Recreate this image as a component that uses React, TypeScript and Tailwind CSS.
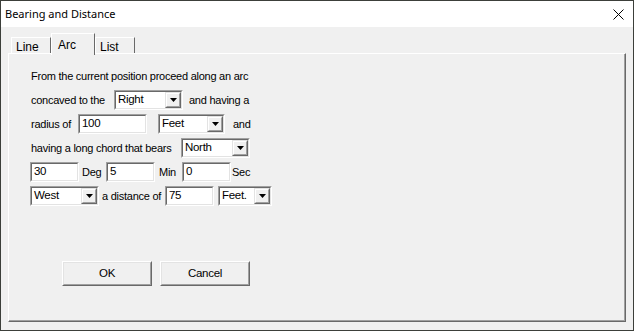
import React from "react";

const font = { fontFamily: '"Liberation Sans", Arial, sans-serif' };

function Sunken({ w, children }: { w: number; children: React.ReactNode }) {
  return (
    <div
      className="h-[20px] shrink-0 border border-t-[#a0a0a0] border-l-[#a0a0a0] border-b-white border-r-white"
      style={{ width: w }}
    >
      <div className="flex h-full w-full border border-t-[#696969] border-l-[#696969] border-b-[#e3e3e3] border-r-[#e3e3e3] bg-white">
        {children}
      </div>
    </div>
  );
}

function Input({ w, value }: { w: number; value: string }) {
  return (
    <Sunken w={w}>
      <span className="flex items-center pl-[2px] text-[11.5px] leading-none tracking-[-0.3px] text-black">{value}</span>
    </Sunken>
  );
}

function Combo({ w, value }: { w: number; value: string }) {
  return (
    <Sunken w={w}>
      <span className="flex flex-1 items-center pl-[2px] text-[11.5px] leading-none tracking-[-0.3px] text-black">{value}</span>
      <div className="h-full w-[16px] border border-t-[#e3e3e3] border-l-[#e3e3e3] border-b-[#696969] border-r-[#696969] bg-[#f0f0f0]">
        <div className="flex h-full w-full items-center justify-center border border-t-white border-l-white border-b-[#a0a0a0] border-r-[#a0a0a0]">
          <svg width="7" height="4" viewBox="0 0 7 4">
            <path d="M0 0h7L3.5 4z" fill="#000" />
          </svg>
        </div>
      </div>
    </Sunken>
  );
}

function T({ w, className = "", children }: { w?: number; className?: string; children: React.ReactNode }) {
  return (
    <span
      className={`shrink-0 whitespace-nowrap text-[11px] leading-none tracking-[-0.25px] text-black ${className}`}
      style={w ? { width: w } : undefined}
    >
      {children}
    </span>
  );
}

function Button({ label }: { label: string }) {
  return (
    <div className="h-[25px] w-[90px] border border-t-white border-l-white border-b-[#696969] border-r-[#696969] bg-[#f0f0f0]">
      <div className="flex h-full w-full items-center justify-center border border-t-[#e3e3e3] border-l-[#e3e3e3] border-b-[#a0a0a0] border-r-[#a0a0a0] text-[11.5px] tracking-[-0.3px] text-black">
        {label}
      </div>
    </div>
  );
}

function Tab({ label, active }: { label: string; active?: boolean }) {
  if (active) {
    return (
      <div className="relative z-10 -mb-[2px] flex h-[22px] w-[44px] items-start border-l border-t border-r border-l-white border-t-white border-r-[#696969] bg-[#f0f0f0] pl-[6px] pt-[2px] text-[12px] text-black">
        {label}
      </div>
    );
  }
  return (
    <div className="mt-[4px] flex h-[16px] w-[40px] items-start border-l border-t border-r border-l-white border-t-white border-r-[#696969] bg-[#f0f0f0] pl-[4px] pt-[3px] text-[12px] leading-none text-black">
      {label}
    </div>
  );
}

export default function App() {
  return (
    <div className="flex h-[331px] w-[634px] flex-col border border-[#3c3f3a] bg-[#f0f0f0]" style={font}>
      <div className="flex h-[26px] shrink-0 items-center justify-between bg-white pl-[4px] pr-[9px]">
        <span className="text-[11px] text-black" style={{ fontFamily: '"Noto Sans", "Open Sans", sans-serif' }}>
          Bearing and Distance
        </span>
        <svg width="11" height="11" viewBox="0 0 11 11">
          <path d="M0.5 0.5L10.5 10.5M10.5 0.5L0.5 10.5" stroke="#000" strokeWidth="1" />
        </svg>
      </div>
      <div className="flex flex-1 flex-col px-[7px] pt-[6px]">
        <div className="flex h-[20px] items-start pl-[3px]">
          <Tab label="Line" />
          <Tab label="Arc" active />
          <Tab label="List" />
        </div>
        <div className="flex h-[269px] flex-col border border-t-white border-l-white border-b-[#696969] border-r-[#696969]">
          <div className="flex h-full flex-col border-b border-r border-b-[#a0a0a0] border-r-[#a0a0a0] pl-[21px] pt-[10px]">
            <div className="flex h-[24px] items-center">
              <T className="pl-[1px]">From the current position proceed along an arc</T>
            </div>
            <div className="flex h-[24px] items-center">
              <T w={84} className="pl-[1px]">concaved to the</T>
              <Combo w={69} value="Right" />
              <T className="ml-[6px]">and having a</T>
            </div>
            <div className="flex h-[24px] items-center">
              <T w={48} className="pl-[1px]">radius of</T>
              <Input w={69} value="100" />
              <div className="w-[11px] shrink-0" />
              <Combo w={67} value="Feet" />
              <T className="ml-[8px]">and</T>
            </div>
            <div className="flex h-[24px] items-center">
              <T w={151} className="pl-[1px]">having a long chord that bears</T>
              <Combo w={69} value="North" />
            </div>
            <div className="flex h-[24px] items-center">
              <Input w={49} value="30" />
              <T w={27} className="pl-[3px]">Deg</T>
              <Input w={49} value="5" />
              <T w={27} className="pl-[4px]">Min</T>
              <Input w={49} value="0" />
              <T className="pl-[1px]">Sec</T>
            </div>
            <div className="flex h-[24px] items-center">
              <Combo w={69} value="West" />
              <T w={66} className="pl-[3px]">a distance of</T>
              <Input w={49} value="75" />
              <div className="w-[4px] shrink-0" />
              <Combo w={54} value="Feet." />
            </div>
            <div className="mt-[53px] flex gap-[8px] pl-[32px]">
              <Button label="OK" />
              <Button label="Cancel" />
            </div>
          </div>
        </div>
      </div>
    </div>
  );
}
